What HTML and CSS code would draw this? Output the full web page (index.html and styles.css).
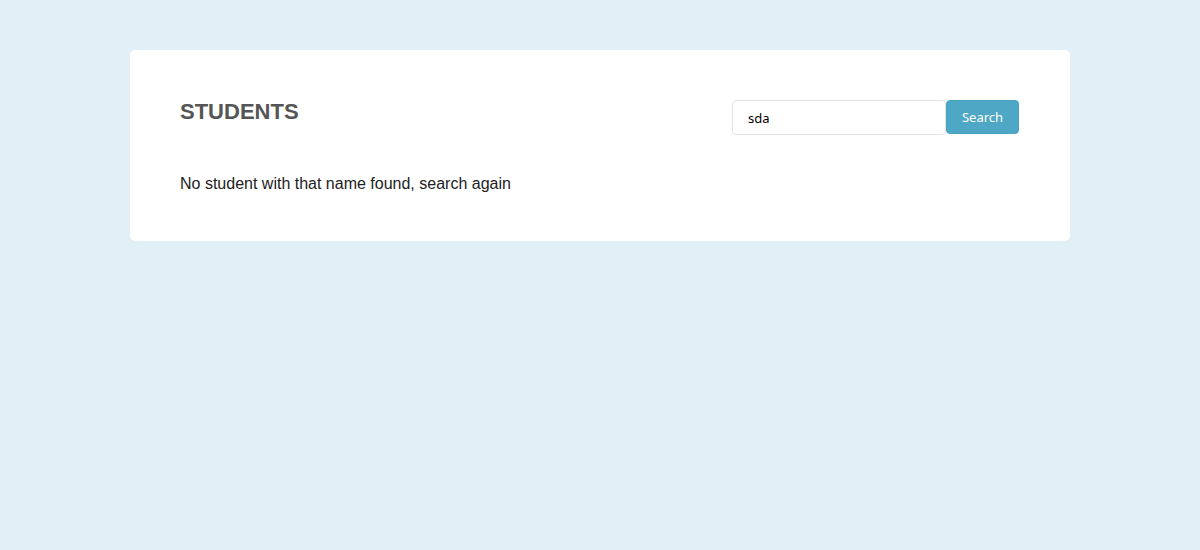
FILE: index.html
```html
<!DOCTYPE html>
<html>
<head>
<meta charset="utf-8">
<link rel="stylesheet" href="styles.css">
</head>
<body>
<div class="card">
  <div class="header">
    <h1 class="title">STUDENTS</h1>
    <form class="search">
      <input class="search-input" type="text" value="sda">
      <button class="search-btn" type="button">Search</button>
    </form>
  </div>
  <p class="message">No student with that name found, search again</p>
</div>
</body>
</html>
```
FILE: styles.css
```css
html, body {
  margin: 0;
  padding: 0;
}
body {
  background: #e1f0f6;
  font-family: "Liberation Sans", Arial, sans-serif;
  height: 550px;
}
.card {
  box-sizing: border-box;
  width: 940px;
  margin: 50px auto 0;
  background: #fff;
  border-radius: 5px;
  padding: 50px 51px 48px 50px;
}
.header {
  display: flex;
  justify-content: space-between;
  align-items: flex-start;
}
.title {
  margin: -1px 0 0;
  font-size: 22px;
  font-weight: bold;
  color: #555;
  line-height: normal;
}
.search {
  display: flex;
  margin: 0;
}
.search-input {
  box-sizing: border-box;
  width: 214px;
  height: 35px;
  border: 1px solid #e3e3e3;
  border-radius: 4px;
  padding: 0 15px;
  font-family: "Noto Sans", "DejaVu Sans", sans-serif;
  font-size: 13px;
  color: #000;
  outline: none;
}
.search-btn {
  box-sizing: border-box;
  width: 73px;
  height: 34px;
  border: 1px solid #4aa3c1;
  border-radius: 4px;
  background: #4ea7c4;
  color: #fff;
  font-family: "Noto Sans", "DejaVu Sans", sans-serif;
  font-size: 13px;
  padding: 0;
}
.message {
  margin: 40px 0 0;
  font-size: 16px;
  color: #222;
  line-height: normal;
}
```
